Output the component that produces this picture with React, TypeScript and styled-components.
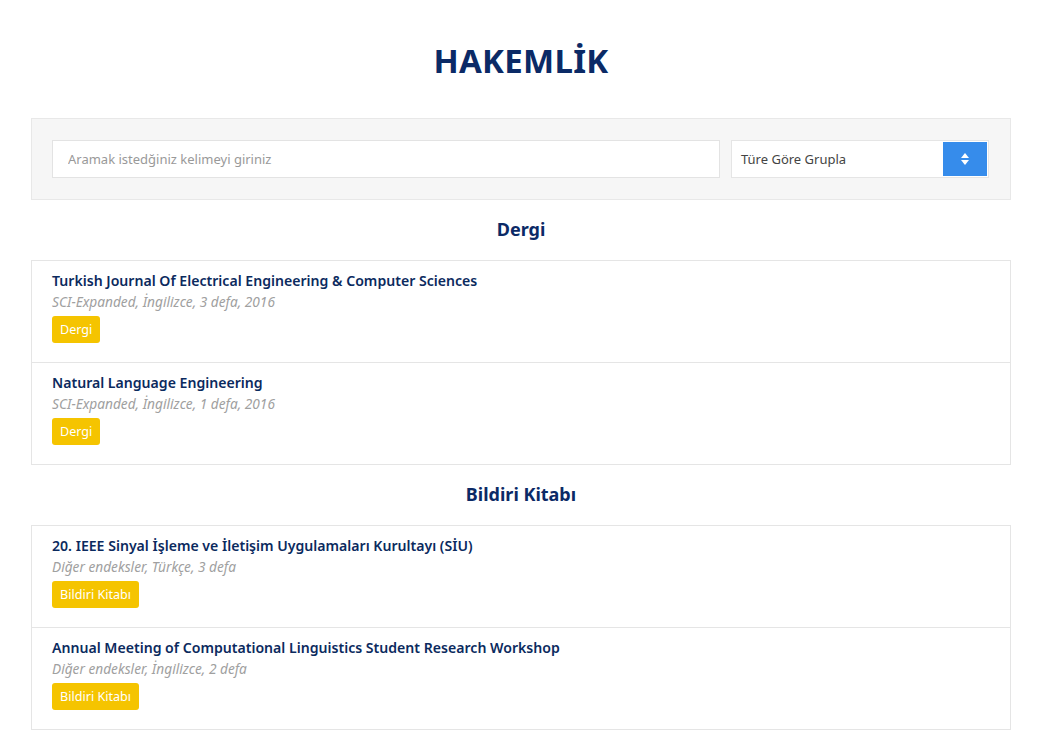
import styled, { createGlobalStyle } from "styled-components";

const GlobalStyle = createGlobalStyle`
  * { box-sizing: border-box; }
  body {
    margin: 0;
    background: #fff;
    font-family: "Noto Sans", "Open Sans", sans-serif;
  }
`;

const Page = styled.div`
  width: 100%;
  padding: 0 28px 0 31px;
`;

const Title = styled.h1`
  margin: 0;
  padding-top: 38px;
  height: 118px;
  text-align: center;
  font-size: 33px;
  font-weight: 700;
  color: #0b2a66;
  letter-spacing: 0.3px;
`;

const SearchPanel = styled.div`
  display: flex;
  gap: 11px;
  padding: 21px 21px 21px 20px;
  background: #f6f6f6;
  border: 1px solid #e8e8e8;
`;

const SearchInput = styled.input`
  flex: 1;
  height: 38px;
  border: 1px solid #e3e3e3;
  background: #fff;
  padding: 0 15px;
  font-family: inherit;
  font-size: 13px;
  color: #555;
  outline: none;

  &::placeholder {
    color: #999;
  }
`;

const Select = styled.div`
  width: 258px;
  height: 38px;
  display: flex;
  align-items: center;
  border: 1px solid #e5e5e5;
  background: #fff;
  padding: 1px;
`;

const SelectLabel = styled.span`
  flex: 1;
  padding-left: 8px;
  font-size: 13px;
  color: #444;
`;

const SelectButton = styled.div`
  width: 44px;
  height: 100%;
  background: #368ceb;
  display: flex;
  align-items: center;
  justify-content: center;
`;

const GroupTitle = styled.h2`
  margin: 0;
  height: 60px;
  padding-top: 17px;
  text-align: center;
  font-size: 18px;
  font-weight: 700;
  color: #0b2a66;
`;

const Card = styled.div`
  border: 1px solid #e5e5e5;
`;

const Item = styled.div`
  height: 101px;
  padding: 10px 20px 0;
  & + & {
    height: 102px;
    border-top: 1px solid #e5e5e5;
  }
`;

const ItemTitle = styled.div`
  font-size: 14.1px;
  font-weight: 600;
  color: #0b2a5e;
  line-height: 20px;
`;

const ItemMeta = styled.div`
  margin-top: 1px;
  font-size: 13.7px;
  font-style: italic;
  color: #a0a0a0;
  line-height: 20px;
`;

const Badge = styled.span`
  display: inline-block;
  margin-top: 4px;
  height: 27px;
  line-height: 27px;
  padding: 0 8px;
  border-radius: 3px;
  background: #f5c400;
  color: #fff;
  font-size: 12.6px;
`;

const groups = [
  {
    name: "Dergi",
    items: [
      {
        title: "Turkish Journal Of Electrical Engineering & Computer Sciences",
        meta: "SCI-Expanded, İngilizce, 3 defa, 2016",
      },
      {
        title: "Natural Language Engineering",
        meta: "SCI-Expanded, İngilizce, 1 defa, 2016",
      },
    ],
  },
  {
    name: "Bildiri Kitabı",
    items: [
      {
        title: "20. IEEE Sinyal İşleme ve İletişim Uygulamaları Kurultayı (SİU)",
        meta: "Diğer endeksler, Türkçe, 3 defa",
      },
      {
        title:
          "Annual Meeting of Computational Linguistics Student Research Workshop",
        meta: "Diğer endeksler, İngilizce, 2 defa",
      },
    ],
  },
];

const App = () => (
  <>
    <GlobalStyle />
    <Page>
      <Title>HAKEMLİK</Title>
      <SearchPanel>
        <SearchInput placeholder="Aramak istedğiniz kelimeyi giriniz" />
        <Select>
          <SelectLabel>Türe Göre Grupla</SelectLabel>
          <SelectButton>
            <svg width="8" height="12" viewBox="0 0 8 12">
              <path d="M4 0 L8 5 H0 Z" fill="#fff" />
              <path d="M0 7 H8 L4 12 Z" fill="#fff" />
            </svg>
          </SelectButton>
        </Select>
      </SearchPanel>
      {groups.map((group) => (
        <div key={group.name}>
          <GroupTitle>{group.name}</GroupTitle>
          <Card>
            {group.items.map((item) => (
              <Item key={item.title}>
                <ItemTitle>{item.title}</ItemTitle>
                <ItemMeta>{item.meta}</ItemMeta>
                <Badge>{group.name}</Badge>
              </Item>
            ))}
          </Card>
        </div>
      ))}
    </Page>
  </>
);

export default App;
